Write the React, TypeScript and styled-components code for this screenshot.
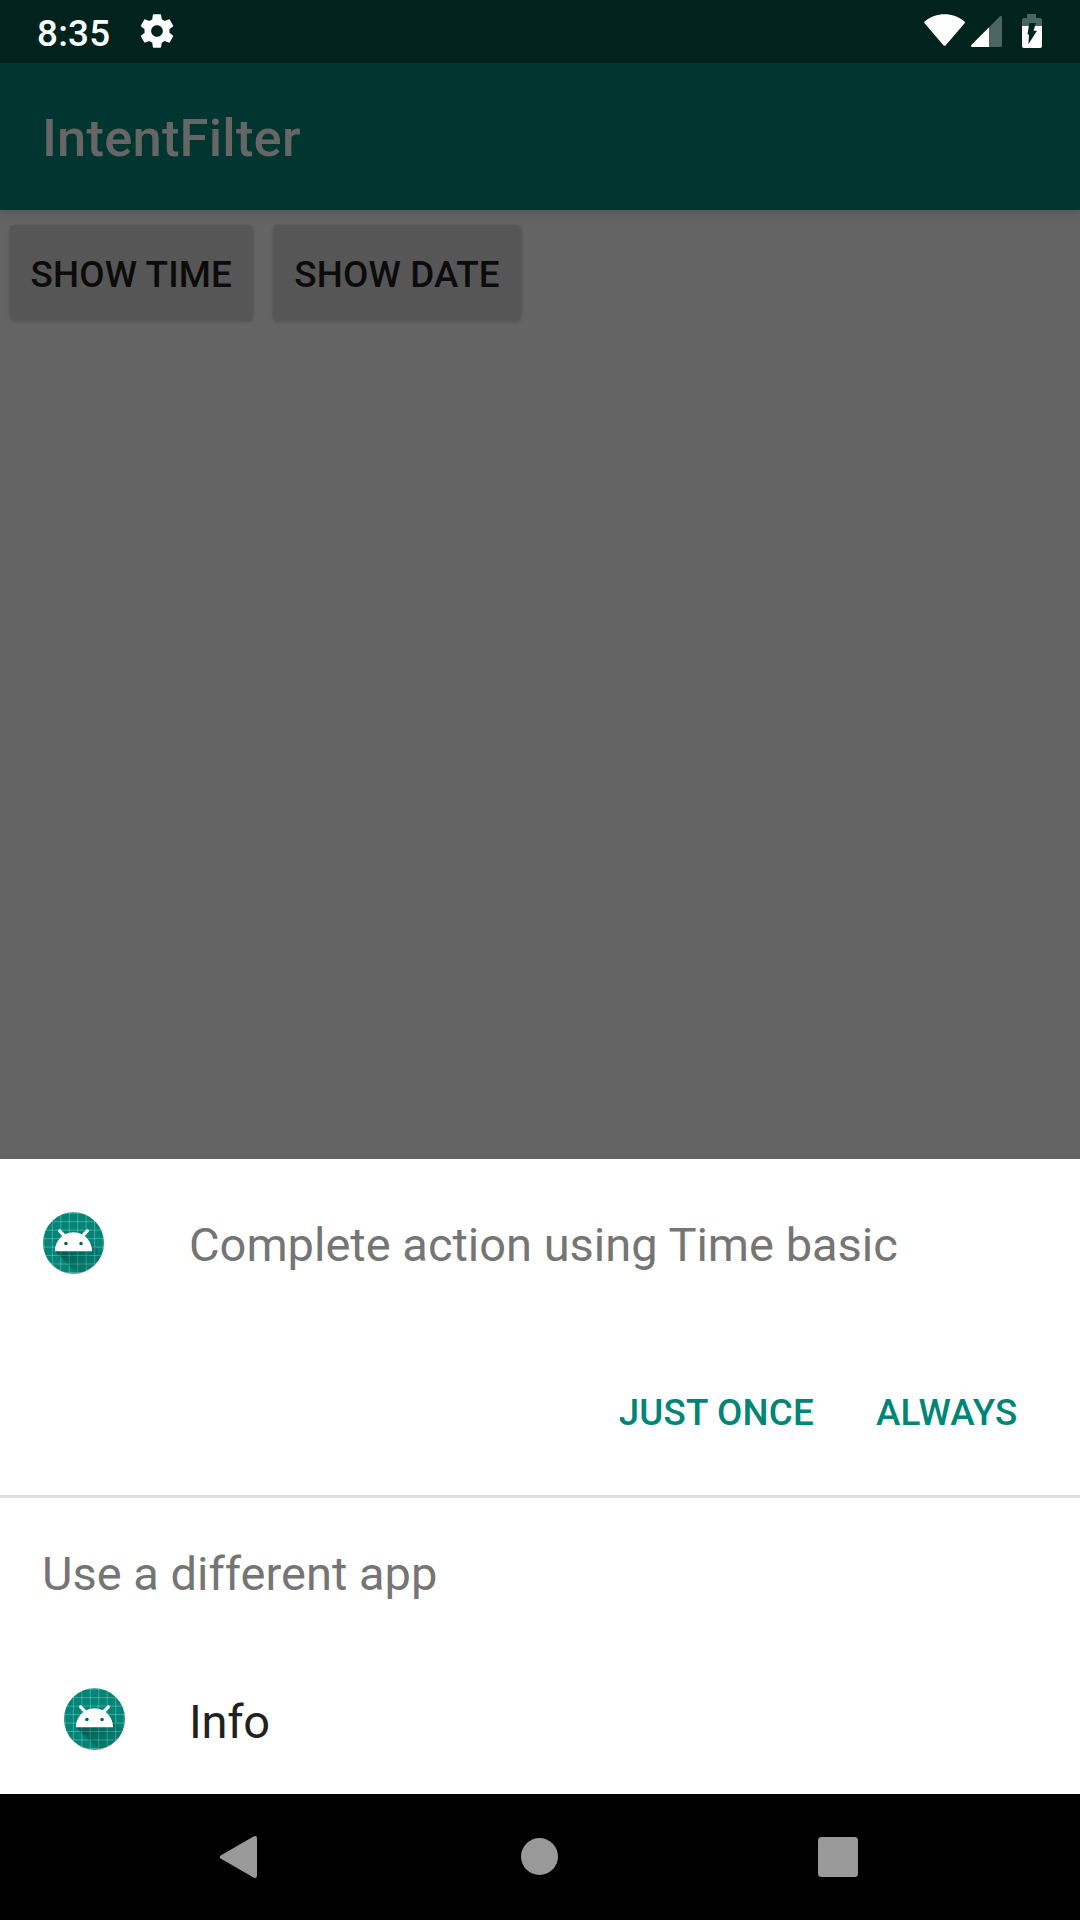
import React from "react";
import styled, { createGlobalStyle } from "styled-components";

const GlobalStyle = createGlobalStyle`
  *, *::before, *::after { box-sizing: border-box; }
  body { margin: 0; background: #000; font-family: Roboto, "Liberation Sans", sans-serif; }
  button { font: inherit; border: 0; padding: 0; background: none; cursor: pointer; }
  svg { display: block; flex: none; }
`;

const Screen = styled.div`
  width: 1080px;
  height: 1920px;
  display: flex;
  flex-direction: column;
  overflow: hidden;
  background: #646464;
`;

const StatusBar = styled.header`
  height: 63px;
  flex: none;
  display: flex;
  align-items: flex-start;
  justify-content: space-between;
  padding: 11px 36px 0 37px;
  background: #00231e;
`;

const StatusGroup = styled.div<{ $gap: number }>`
  display: flex;
  align-items: flex-start;
  gap: ${(p) => p.$gap}px;
`;

const Clock = styled.time`
  font-size: 36.75px;
  font-weight: 500;
  letter-spacing: 0.25px;
  line-height: 44px;
  padding-top: 1px;
  width: 73px;
  white-space: nowrap;
  color: #fff;
`;

const AppBar = styled.div`
  height: 147px;
  flex: none;
  display: flex;
  align-items: center;
  padding: 3px 42px 0;
  background: #003530;
  box-shadow: 0 3px 10px rgba(0, 0, 0, 0.16);
`;

const Title = styled.h1`
  margin: 0;
  font-size: 52.5px;
  font-weight: 500;
  letter-spacing: 0.2px;
  line-height: 62px;
  color: #666;
`;

const Content = styled.main`
  flex: 1;
  display: flex;
  align-items: flex-start;
  gap: 20px;
  padding: 15px 9.5px;
`;

const RaisedButton = styled.button<{ $width: number }>`
  width: ${(p) => p.$width}px;
  height: 96px;
  padding-top: 3px;
  border-radius: 5px;
  background: #565656;
  box-shadow: 0 1px 3px rgba(0, 0, 0, 0.12), 0 0 4px rgba(0, 0, 0, 0.08);
  font-size: 36.75px;
  font-weight: 500;
  letter-spacing: 0.15px;
  color: #0b0b0b;
  white-space: nowrap;
`;

const Sheet = styled.section`
  height: 635px;
  flex: none;
  display: flex;
  flex-direction: column;
  background: #fff;
`;

const PrimaryRow = styled.div`
  height: 170px;
  display: flex;
  align-items: center;
  gap: 84px;
  padding-left: 42px;
`;

const Label = styled.span<{ $tone: string; $lift?: number }>`
  font-size: 47px;
  line-height: 56px;
  padding-top: ${(p) => 4 - (p.$lift ?? 0)}px;
  white-space: nowrap;
  color: ${(p) => p.$tone};
`;

const Actions = styled.div`
  height: 166px;
  display: flex;
  justify-content: flex-end;
  align-items: center;
  gap: 62px;
  padding: 2px 62.5px 0 0;
`;

const FlatButton = styled.button`
  font-size: 36.75px;
  font-weight: 500;
  letter-spacing: 0.2px;
  line-height: 44px;
  color: #008577;
  white-space: nowrap;
`;

const Divider = styled.hr`
  width: 100%;
  height: 3px;
  margin: 0;
  border: 0;
  background: #e0e0e0;
`;

const SubHeader = styled.div`
  height: 147px;
  display: flex;
  align-items: center;
  padding: 1px 42px 0;
`;

const AppRow = styled.div`
  height: 149px;
  display: flex;
  align-items: center;
  gap: 63px;
  padding: 1px 0 0 63px;
  letter-spacing: -0.3px;
`;

const NavBar = styled.nav`
  height: 126px;
  flex: none;
  display: flex;
  align-items: center;
  justify-content: space-between;
  padding: 0 222px 0 219px;
  background: #000;
`;

const NavButton = styled.button`
  display: flex;
`;

const GearIcon = () => (
  <svg width="40" height="40" viewBox="0 0 24 24" fill="#fff">
    <path d="M19.43 12.98c.04-.32.07-.64.07-.98s-.03-.66-.07-.98l2.11-1.65c.19-.15.24-.42.12-.64l-2-3.46c-.12-.22-.39-.3-.61-.22l-2.49 1c-.52-.4-1.08-.73-1.69-.98l-.38-2.65C14.46 2.18 14.25 2 14 2h-4c-.25 0-.46.18-.49.42l-.38 2.65c-.61.25-1.17.59-1.69.98l-2.49-1c-.23-.09-.49 0-.61.22l-2 3.46c-.13.22-.07.49.12.64l2.11 1.65c-.04.32-.07.65-.07.98s.03.66.07.98l-2.11 1.65c-.19.15-.24.42-.12.64l2 3.46c.12.22.39.3.61.22l2.49-1c.52.4 1.08.73 1.69.98l.38 2.65c.03.24.24.42.49.42h4c.25 0 .46-.18.49-.42l.38-2.65c.61-.25 1.17-.59 1.69-.98l2.49 1c.23.09.49 0 .61-.22l2-3.46c.12-.22.07-.49-.12-.64l-2.11-1.65zM12 15.5c-1.93 0-3.5-1.57-3.5-3.5s1.57-3.5 3.5-3.5 3.5 1.57 3.5 3.5-1.57 3.5-3.5 3.5z" />
  </svg>
);

const StatusIcons = () => (
  <svg width="120" height="40" viewBox="924 11 120 40">
    <path
      d="M924.6 23.2Q923.8 22.3 924.8 21.3C936 11.8 953 11.8 964.3 21.3Q965.4 22.3 964.6 23.2L945.8 45.2Q944.6 46.4 943.4 45.2Z"
      fill="#fff"
    />
    <path d="M989 27.3L1000 16.3Q1002 15.2 1002 17.2V45.5Q1002 47 1000.5 47H989Z" fill="#4d6561" />
    <path d="M989 27.3V47H972Q970.2 46.3 971.3 45Z" fill="#fff" />
    <path d="M1027 14H1036V18H1040Q1042 18 1042 20V26H1022V20Q1022 18 1024 18H1027Z" fill="#4d6561" />
    <path d="M1022 26H1042V46Q1042 48 1040 48H1024Q1022 48 1022 46Z" fill="#fff" />
    <path d="M1029.3 23H1035.8L1033.6 30.8H1037L1028.4 44.3L1029 34.5H1027.5Z" fill="#00231e" />
  </svg>
);

const gridLines = [19, 29, 39, 49, 59, 69, 79, 89];

const LauncherIcon = ({ id }: { id: string }) => (
  <svg width="63" height="64" viewBox="16.8 17 74.4 75.56">
    <defs>
      <clipPath id={`${id}-mask`}>
        <circle cx="54" cy="53.3" r="36" />
      </clipPath>
      <linearGradient
        id={`${id}-shade`}
        gradientUnits="userSpaceOnUse"
        x1="48.77"
        y1="61.09"
        x2="78.59"
        y2="90.92"
      >
        <stop offset="0" stopColor="#000" stopOpacity="0.27" />
        <stop offset="1" stopColor="#000" stopOpacity="0" />
      </linearGradient>
      <filter id={`${id}-blur`} x="-10%" y="-10%" width="120%" height="120%">
        <feGaussianBlur stdDeviation="0.8" />
      </filter>
    </defs>
    <circle cx="54" cy="54.8" r="35.6" fill="#000" fillOpacity="0.4" filter={`url(#${id}-blur)`} />
    <g clipPath={`url(#${id}-mask)`}>
      <rect x="17" y="17" width="75" height="75" fill="#008577" />
      <g stroke="#fff" strokeOpacity="0.32" strokeWidth="1">
        {gridLines.map((n) => (
          <React.Fragment key={n}>
            <path d={`M${n} 17V92`} />
            <path d={`M17 ${n - 0.6}H92`} />
          </React.Fragment>
        ))}
      </g>
      <g transform="translate(0 -0.7)">
        <path
          d="M32 64C32 64 38.39 52.99 44.13 50.95C51.37 48.37 70.14 49.57 70.14 49.57L108.26 87.69L108 109.01L75.97 107.97L32 64Z"
          fill={`url(#${id}-shade)`}
        />
        <path
          fill="#fff"
          d="M66.94 46.02C72.44 50.07 76 56.61 76 64L32 64C32 56.61 35.56 50.11 40.98 46.06L36.18 41.19C35.45 40.45 35.45 39.3 36.18 38.56C36.91 37.81 38.05 37.81 38.78 38.56L44.25 44.05C47.18 42.57 50.48 41.71 54 41.71C57.48 41.71 60.78 42.57 63.68 44.05L69.11 38.56C69.84 37.81 70.98 37.81 71.71 38.56C72.44 39.3 72.44 40.45 71.71 41.19L66.94 46.02ZM62.94 56.92C64.08 56.92 65 56.01 65 54.88C65 53.76 64.08 52.85 62.94 52.85C61.8 52.85 60.88 53.76 60.88 54.88C60.88 56.01 61.8 56.92 62.94 56.92ZM45.06 56.92C46.2 56.92 47.13 56.01 47.13 54.88C47.13 53.76 46.2 52.85 45.06 52.85C43.92 52.85 43 53.76 43 54.88C43 56.01 43.92 56.92 45.06 56.92Z"
        />
      </g>
    </g>
  </svg>
);

const BackIcon = () => (
  <svg width="40" height="44" viewBox="0 0 40 44" fill="#999">
    <path d="M1.6 20.6L34.5 1.6Q38 0 38 3.5V40.5Q38 44 34.5 42.4L1.6 23.6Q0 22.1 1.6 20.6Z" />
  </svg>
);

const HomeIcon = () => (
  <svg width="38" height="38" viewBox="0 0 38 38">
    <circle cx="19.5" cy="18.5" r="18.5" fill="#999" />
  </svg>
);

const RecentsIcon = () => (
  <svg width="40" height="40" viewBox="0 0 40 40">
    <rect width="40" height="40" rx="3.5" fill="#999" />
  </svg>
);

export default function App() {
  return (
    <>
      <GlobalStyle />
      <Screen>
        <StatusBar>
          <StatusGroup $gap={27}>
            <Clock>8:35</Clock>
            <GearIcon />
          </StatusGroup>
          <StatusGroup $gap={0}>
            <StatusIcons />
          </StatusGroup>
        </StatusBar>
        <AppBar>
          <Title>IntentFilter</Title>
        </AppBar>
        <Content>
          <RaisedButton $width={243.5}>SHOW TIME</RaisedButton>
          <RaisedButton $width={248}>SHOW DATE</RaisedButton>
        </Content>
        <Sheet>
          <PrimaryRow>
            <LauncherIcon id="primary" />
            <Label $tone="#757575" $lift={2}>
              Complete action using Time basic
            </Label>
          </PrimaryRow>
          <Actions>
            <FlatButton>JUST ONCE</FlatButton>
            <FlatButton>ALWAYS</FlatButton>
          </Actions>
          <Divider />
          <SubHeader>
            <Label $tone="#757575">Use a different app</Label>
          </SubHeader>
          <AppRow>
            <LauncherIcon id="info" />
            <Label $tone="#212121">Info</Label>
          </AppRow>
        </Sheet>
        <NavBar>
          <NavButton aria-label="Back">
            <BackIcon />
          </NavButton>
          <NavButton aria-label="Home">
            <HomeIcon />
          </NavButton>
          <NavButton aria-label="Recents">
            <RecentsIcon />
          </NavButton>
        </NavBar>
      </Screen>
    </>
  );
}
